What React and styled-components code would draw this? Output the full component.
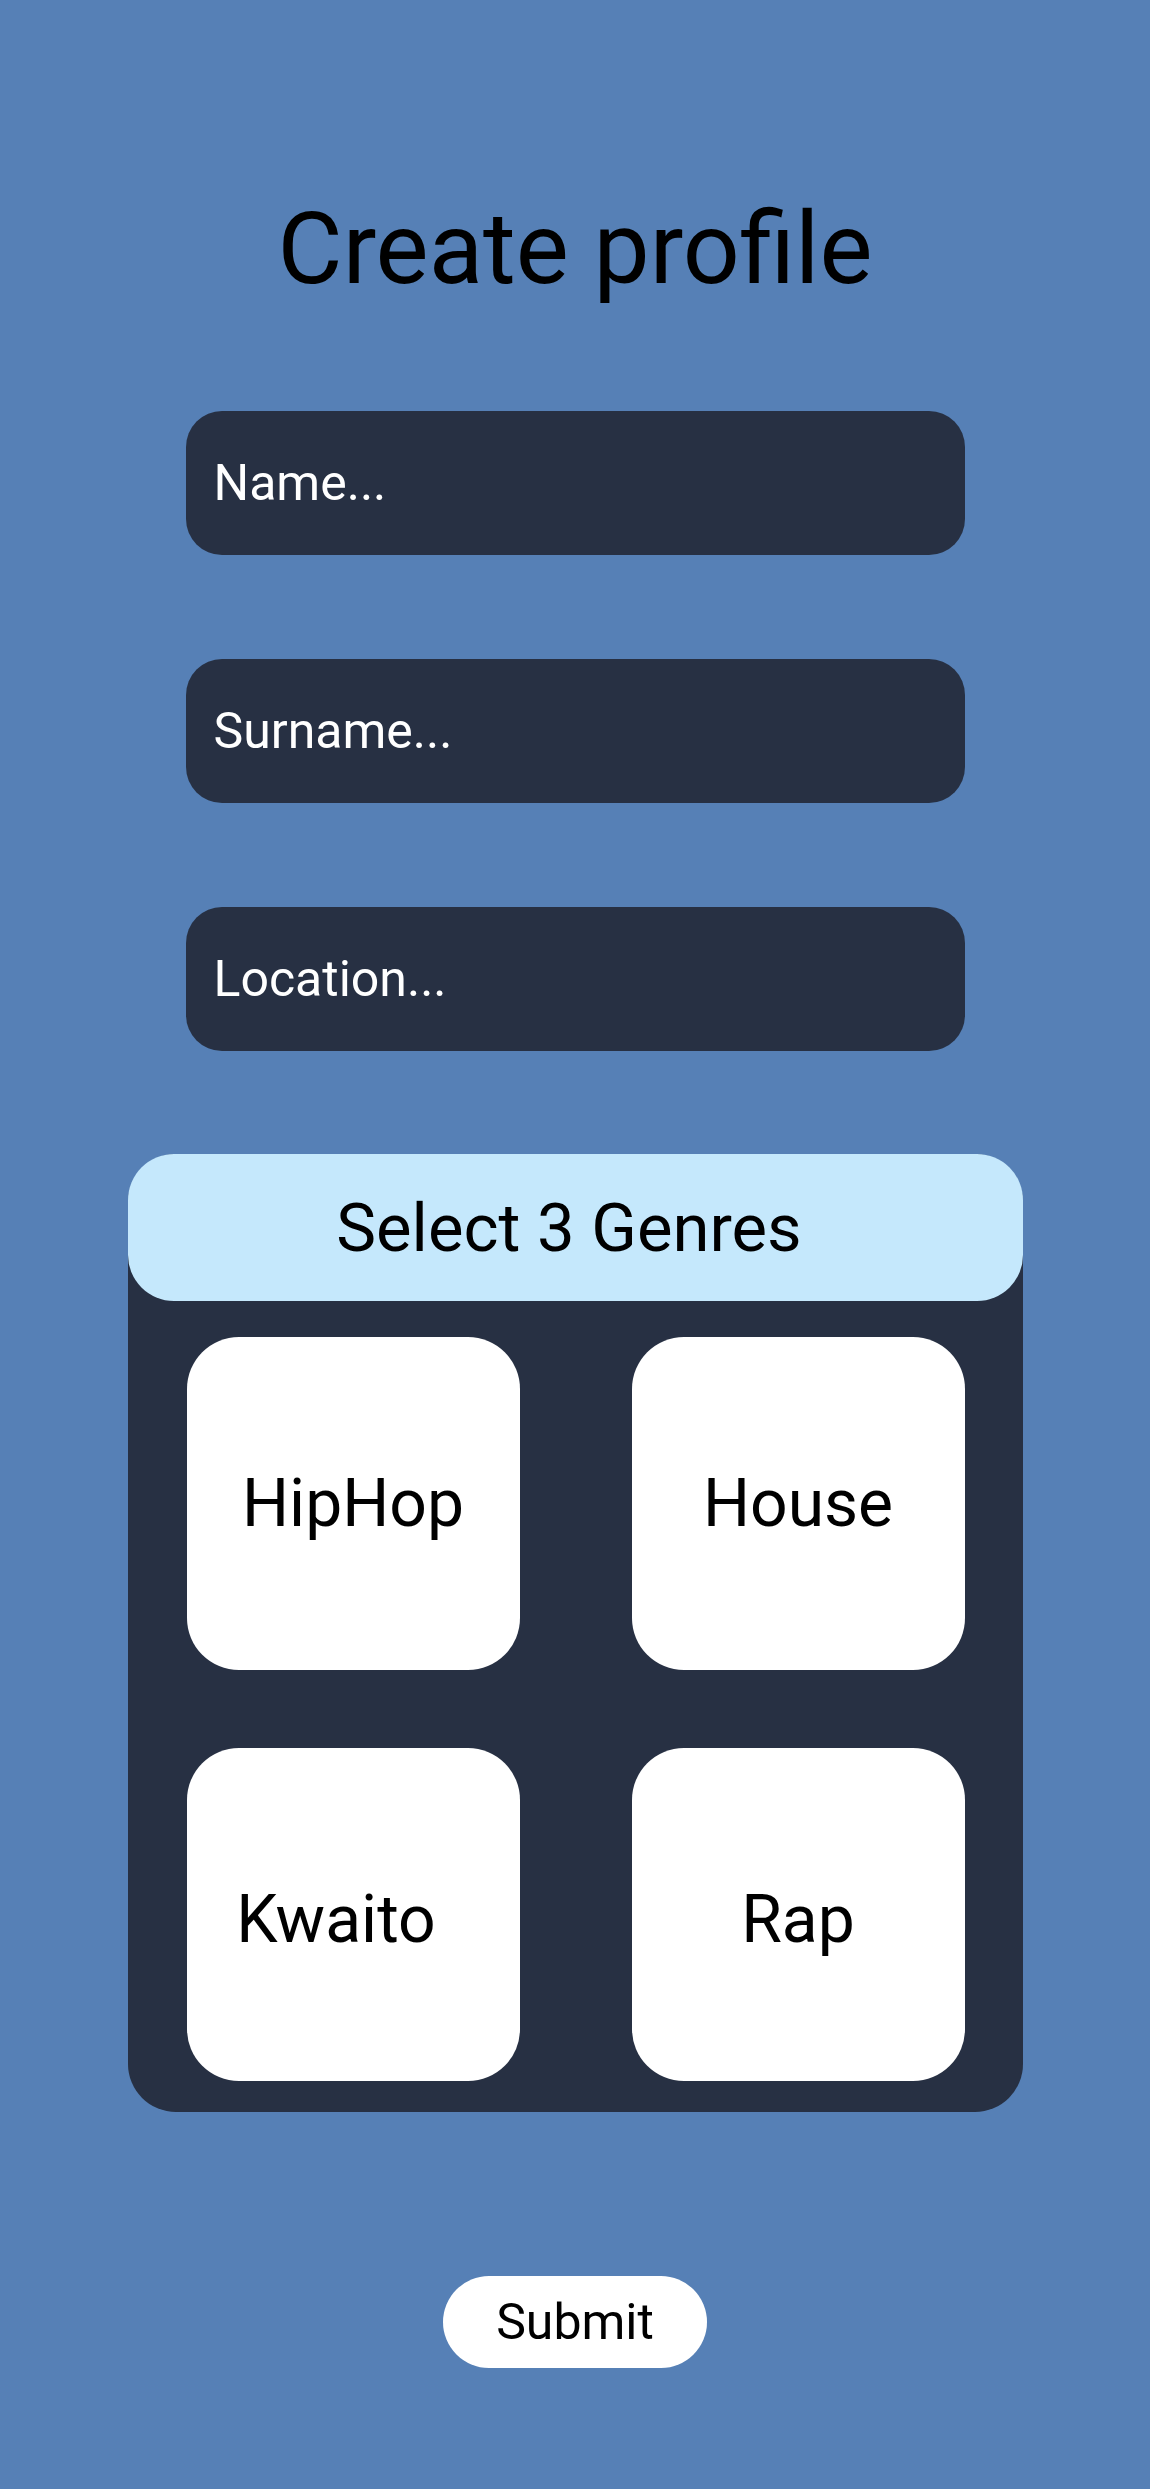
import styled, { createGlobalStyle } from "styled-components";

const GlobalStyle = createGlobalStyle`
  body {
    margin: 0;
    background: #5680b6;
    font-family: Roboto, "Liberation Sans", sans-serif;
  }
`;

const genres = [
  { name: "HipHop" },
  { name: "House" },
  { name: "Kwaito", offset: 34, drop: 9 },
  { name: "Rap", drop: 9 },
];

function App() {
  return (
    <>
      <GlobalStyle />
      <Page>
        <Title>Create profile</Title>
        <Fields>
          <Field placeholder="Name..." />
          <Field placeholder="Surname..." />
          <Field placeholder="Location..." />
        </Fields>
        <GenrePanel>
          <GenreHeader>Select 3 Genres</GenreHeader>
          <GenreGrid>
            {genres.map((g) => (
              <GenreCard key={g.name} $offset={g.offset} $drop={g.drop}>
                {g.name}
              </GenreCard>
            ))}
          </GenreGrid>
        </GenrePanel>
        <SubmitButton>Submit</SubmitButton>
      </Page>
    </>
  );
}

export default App;

const Page = styled.div`
  display: flex;
  flex-direction: column;
  align-items: center;
  min-height: 2489px;
  padding-top: 199px;
  box-sizing: border-box;
  background: #5680b6;
`;

const Title = styled.h1`
  margin: 0;
  font-size: 100px;
  line-height: 100px;
  font-weight: 400;
  color: #000;
`;

const Fields = styled.div`
  display: flex;
  flex-direction: column;
  gap: 104px;
  margin-top: 112px;
`;

const Field = styled.input`
  width: 779px;
  height: 144px;
  box-sizing: border-box;
  padding: 0 28px;
  border: none;
  border-radius: 36px;
  background: #273043;
  color: #fff;
  font-family: Roboto, "Liberation Sans", sans-serif;
  font-size: 50px;
  outline: none;

  &::placeholder {
    color: #fff;
    opacity: 1;
  }
`;

const GenrePanel = styled.div`
  width: 895px;
  margin-top: 103px;
  background: #273043;
  border-radius: 48px;
  display: flex;
  flex-direction: column;
`;

const GenreHeader = styled.div`
  height: 147px;
  display: flex;
  align-items: center;
  justify-content: center;
  padding-right: 12px;
  background: #c5e8fc;
  border-radius: 46px;
  font-size: 67px;
  color: #000;
`;

const GenreGrid = styled.div`
  display: grid;
  grid-template-columns: 333px 333px;
  column-gap: 112px;
  row-gap: 78px;
  padding: 36px 58px 31px 59px;
`;

const GenreCard = styled.div`
  height: 333px;
  display: flex;
  align-items: center;
  justify-content: center;
  padding-right: ${(p) => p.$offset || 0}px;
  padding-top: ${(p) => p.$drop || 0}px;
  box-sizing: border-box;
  background: #fff;
  border-radius: 52px;
  font-size: 66px;
  color: #000;
`;

const SubmitButton = styled.button`
  margin-top: 164px;
  width: 264px;
  height: 92px;
  border: none;
  border-radius: 46px;
  background: #fff;
  color: #000;
  font-family: Roboto, "Liberation Sans", sans-serif;
  font-size: 50px;
  cursor: pointer;
`;
